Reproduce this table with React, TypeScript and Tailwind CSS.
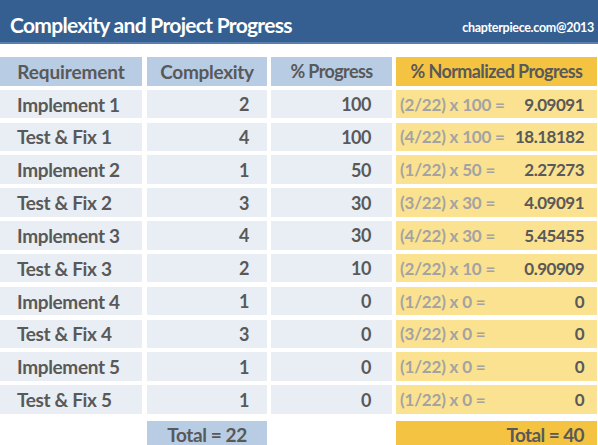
import React from "react";

const rows = [
  ["Implement 1", "2", "100", "(2/22) x 100 =", "9.09091"],
  ["Test & Fix 1", "4", "100", "(4/22) x 100 =", "18.18182"],
  ["Implement 2", "1", "50", "(1/22) x 50 =", "2.27273"],
  ["Test & Fix 2", "3", "30", "(3/22) x 30 =", "4.09091"],
  ["Implement 3", "4", "30", "(4/22) x 30 =", "5.45455"],
  ["Test & Fix 3", "2", "10", "(2/22) x 10 =", "0.90909"],
  ["Implement 4", "1", "0", "(1/22) x 0 =", "0"],
  ["Test & Fix 4", "3", "0", "(3/22) x 0 =", "0"],
  ["Implement 5", "1", "0", "(1/22) x 0 =", "0"],
  ["Test & Fix 5", "1", "0", "(1/22) x 0 =", "0"],
];

export default function App() {
  return (
    <div
      className="w-[598px] h-[445px] bg-white overflow-hidden font-bold text-[#595959] whitespace-nowrap"
      style={{ fontFamily: "Lato, 'Liberation Sans', sans-serif" }}
    >
      <div className="h-[44px] bg-[#365f91] border-b-2 border-[#5a7fae] flex items-end justify-between pl-[10px] pr-[4px] pb-[7px] text-white">
        <span className="text-[21px] leading-none tracking-[-0.7px]">Complexity and Project Progress</span>
        <span className="text-[12.5px] leading-none tracking-[-0.3px] mb-[1px]">chapterpiece.com@2013</span>
      </div>
      <div className="mt-[13px] flex flex-col gap-y-[4.33px]">
        <div className="grid grid-cols-[142px_121px_121px_201px] gap-x-[4px] h-[28.5px] text-[19px] leading-none">
          <div className="bg-[#b8cce4] flex items-center justify-center tracking-[-0.1px]">Requirement</div>
          <div className="bg-[#b8cce4] flex items-center justify-center ml-[1px] tracking-[-0.3px]">Complexity</div>
          <div className="bg-[#b8cce4] flex items-center justify-center text-[18px] tracking-[-0.6px]">% Progress</div>
          <div className="bg-[#f5c342] flex items-center justify-center text-[18px] tracking-[-0.6px]">% Normalized Progress</div>
        </div>
        {rows.map((r, i) => (
          <div
            key={i}
            className="grid grid-cols-[142px_121px_121px_201px] gap-x-[4px] h-[28.5px] leading-none"
          >
            <div className="bg-[#e8eef4] flex items-center pl-[17px] text-[19px] tracking-[-0.35px]">{r[0]}</div>
            <div className="bg-[#e8eef4] flex items-center justify-end pr-[18px] ml-[1px] text-[18px] tracking-[-0.5px]">{r[1]}</div>
            <div className="bg-[#e8eef4] flex items-center justify-end pr-[21px] text-[18px] tracking-[-0.5px]">{r[2]}</div>
            <div className="bg-[#fae290] flex items-center justify-between pl-[4px] pr-[13px]">
              <span className="text-[#a3a3a3] text-[17px] tracking-[-0.2px]">{r[3]}</span>
              <span className="text-[17px] tracking-[-0.5px]">{r[4]}</span>
            </div>
          </div>
        ))}
        <div className="grid grid-cols-[142px_121px_121px_201px] gap-x-[4px] h-[28px] text-[19px] leading-none mt-[2.7px]">
          <div />
          <div className="bg-[#b8cce4] flex items-center justify-center ml-[1px] tracking-[-0.4px]">Total = 22</div>
          <div />
          <div className="bg-[#f5c342] flex items-center justify-end pr-[13px] tracking-[-0.6px]">Total = 40</div>
        </div>
      </div>
    </div>
  );
}
